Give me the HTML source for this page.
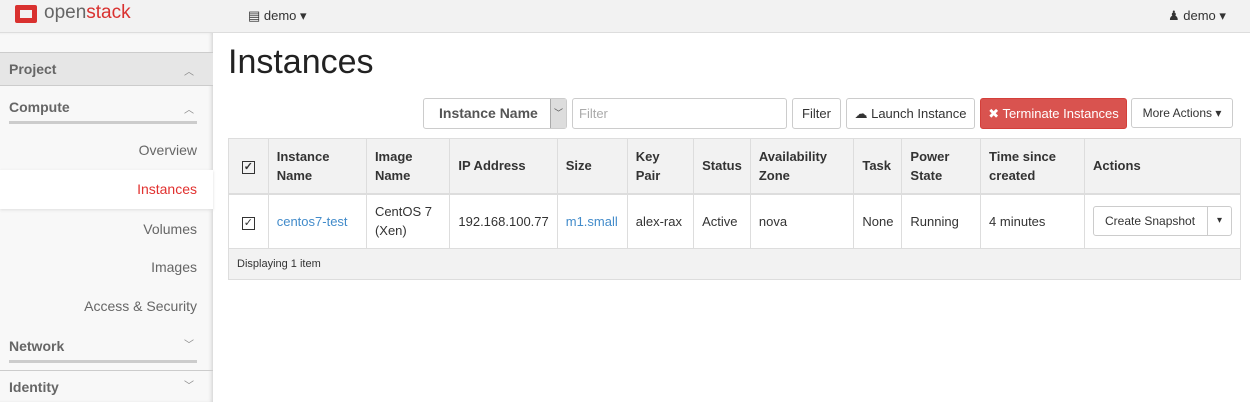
<!DOCTYPE html>
<html><head><style>
*{box-sizing:border-box;margin:0;padding:0}
body{width:1250px;height:402px;overflow:hidden;font-family:"Liberation Sans",sans-serif;font-size:13px;color:#333;background:#fff;position:relative}
.a{position:absolute}
.top{left:0;top:0;width:1250px;height:33px;background:#f2f2f2;border-bottom:1px solid #ddd}
.side{left:0;top:33px;width:213px;height:369px;background:#f8f8f8;box-shadow:inset -3px 0 4px -2px #ccc}
.si{position:absolute;left:0;width:197px;text-align:right;font-size:14px;color:#666;z-index:2}
.hd{position:absolute;left:9px;font-size:14px;font-weight:bold;color:#666}
.car{position:absolute;left:184px;font-size:10px;color:#888}
.btn{position:absolute;top:98px;height:31px;border:1px solid #ccc;border-radius:3px;background:#fff;font-size:13px;line-height:29px;text-align:center;color:#333}
table{position:absolute;left:228px;top:138px;width:1013px;border-collapse:collapse}
td,th{border:1px solid #ddd;padding:0 8px;text-align:left;vertical-align:middle;font-size:13px}
th{background:#f2f2f2;height:55px;line-height:19px;border-bottom:2px solid #ddd}
tr.r td{height:55px;line-height:19px}
a{color:#428bca;text-decoration:none}
.cb{display:inline-block;width:13px;height:13px;border:1px solid #333;font-size:11px;line-height:11px;text-align:center}
</style></head><body>
<div class="a top"></div>
<div class="a" style="left:15px;top:5px;width:22px;height:18px;background:#d9312f;border-radius:2px"></div>
<div class="a" style="left:20px;top:10px;width:12px;height:8px;background:#f2f2f2"></div>
<div class="a" style="left:44px;top:2px;font-size:19px;color:#666">open<span style="color:#d9312f">stack</span></div>
<div class="a" style="left:248px;top:8px;font-size:13px">▤ demo ▾</div>
<div class="a" style="left:1168px;top:8px;font-size:13px">&#9823; demo ▾</div>
<div class="a side"></div>
<div class="a" style="left:0;top:52px;width:213px;height:34px;background:#e6e6e6;border-top:1px solid #ccc;border-bottom:1px solid #ccc"></div>
<div class="hd" style="top:61px">Project</div><div class="car" style="top:63px">︿</div>
<div class="hd" style="top:99px">Compute</div><div class="car" style="top:101px">︿</div>
<div class="a" style="left:9px;top:121px;width:188px;height:3px;background:#ccc"></div>
<div class="si" style="top:142px">Overview</div>
<div class="a" style="left:0;top:170px;width:213px;height:39px;background:#fff;box-shadow:0 1px 3px #ddd"></div>
<div class="si" style="top:181px;color:#e1312f">Instances</div>
<div class="si" style="top:221px">Volumes</div>
<div class="si" style="top:259px">Images</div>
<div class="si" style="top:298px">Access &amp; Security</div>
<div class="hd" style="top:338px">Network</div><div class="car" style="top:336px">﹀</div>
<div class="a" style="left:9px;top:360px;width:188px;height:3px;background:#ccc"></div>
<div class="a" style="left:0;top:370px;width:213px;height:1px;background:#ccc"></div>
<div class="hd" style="top:379px">Identity</div><div class="car" style="top:377px">﹀</div>
<div class="a" style="left:228px;top:43px;font-size:34px;color:#222">Instances</div>
<div class="btn" style="left:423px;width:144px;text-align:left;padding-left:15px;font-size:14px;font-weight:bold;color:#555">Instance Name<span style="position:absolute;right:0;top:0;width:16px;height:29px;background:#ddd;border-left:1px solid #aaa;font-size:9px;text-align:center;font-weight:normal">﹀</span></div>
<div class="btn" style="left:572px;width:215px;text-align:left;padding-left:6px;color:#aaa">Filter</div>
<div class="btn" style="left:792px;width:49px">Filter</div>
<div class="btn" style="left:846px;width:129px">☁ Launch Instance</div>
<div class="btn" style="left:980px;width:147px;background:#d9534f;border-color:#d43f3a;color:#fff">✖ Terminate Instances</div>
<div class="btn" style="left:1131px;width:102px;height:30px;line-height:28px;font-size:12px">More Actions ▾</div>
<table>
<tr><th style="width:40px;text-align:center"><span class="cb">✓</span></th><th style="width:99px">Instance<br>Name</th><th style="width:84px">Image<br>Name</th><th style="width:106px">IP Address</th><th style="width:70px">Size</th><th style="width:67px">Key<br>Pair</th><th style="width:56px">Status</th><th style="width:104px">Availability<br>Zone</th><th style="width:47px">Task</th><th style="width:79px">Power<br>State</th><th style="width:105px">Time since<br>created</th><th>Actions</th></tr>
<tr class="r"><td style="text-align:center"><span class="cb">✓</span></td><td><a>centos7-test</a></td><td>CentOS 7<br>(Xen)</td><td>192.168.100.77</td><td><a>m1.small</a></td><td>alex-rax</td><td>Active</td><td>nova</td><td>None</td><td>Running</td><td>4 minutes</td><td><span style="display:inline-block;border:1px solid #ccc;border-radius:3px;height:30px;line-height:28px;font-size:12px;padding:0 0 0 11px;width:139px;position:relative">Create Snapshot<span style="position:absolute;right:0;top:0;width:24px;height:28px;border-left:1px solid #ccc;text-align:center;font-size:10px">▾</span></span></td></tr>
<tr><td colspan="12" style="background:#f2f2f2;height:31px;font-size:11px">Displaying 1 item</td></tr>
</table>
</body></html>
